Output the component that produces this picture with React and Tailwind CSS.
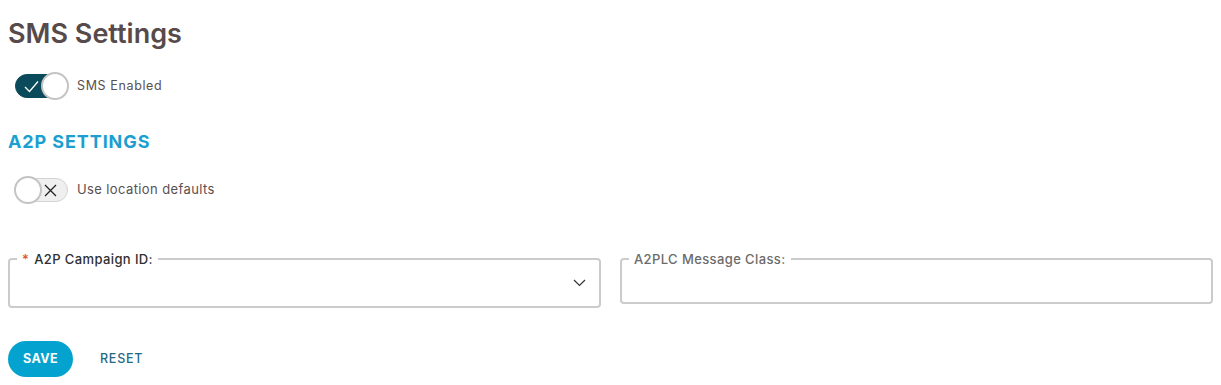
import React, { useState } from 'react';

const Toggle = ({ on, onChange }) => (
  <button
    type="button"
    onClick={() => onChange(!on)}
    className={`relative flex h-[24px] w-[53px] items-center rounded-full border ${on ? 'border-[#0b4a5a] bg-[#0b4a5a]' : 'border-[#d4d4d4] bg-[#efefef]'}`}
  >
    {on ? (
      <svg className="absolute left-[8px] h-[13px] w-[15px]" viewBox="0 0 15 13" fill="none" stroke="white" strokeWidth="1.3">
        <path d="M1 7 L5.5 11.5 L14 1.5" />
      </svg>
    ) : (
      <svg className="absolute right-[10px] h-[13px] w-[13px]" viewBox="0 0 13 13" fill="none" stroke="#222" strokeWidth="1.3">
        <path d="M1 1 L12 12 M12 1 L1 12" />
      </svg>
    )}
    <span
      className={`absolute top-1/2 h-[28px] w-[28px] -translate-y-1/2 rounded-full border-2 border-[#c4c4c4] bg-white ${on ? 'right-[-2px]' : 'left-[-2px]'}`}
    />
  </button>
);

const Field = ({ label, required, select, muted, h }) => (
  <fieldset className={`rounded-[4px] border-2 border-[#cbcbcb] px-3 ${h}`}>
    <legend className={`ml-[-5px] px-[5px] text-[13px] font-medium leading-[14px] tracking-[0.03em] ${muted ? 'text-[#6b6b6b]' : 'text-[#2f2f2f]'}`}>
      {required && <span className="mr-[5px] text-[#e0502a]">*</span>}
      {label}
    </legend>
    {select && (
      <div className="flex h-full items-center justify-end pb-[6px] pr-[1px]">
        <svg className="h-[8px] w-[13px]" viewBox="0 0 13 8" fill="none" stroke="#333" strokeWidth="1.2">
          <path d="M1 1 L6.5 6.5 L12 1" />
        </svg>
      </div>
    )}
  </fieldset>
);

const App = () => {
  const [sms, setSms] = useState(true);
  const [defaults, setDefaults] = useState(false);

  return (
    <div className="min-h-[385px] bg-white px-2 pt-[17px] font-['Inter',sans-serif]">
      <h1 className="text-[27px] font-semibold leading-[34px] text-[#574a4a]">SMS Settings</h1>

      <div className="mt-[23px] flex items-center gap-[9px] pl-[7px]">
        <Toggle on={sms} onChange={setSms} />
        <span className="text-[12.5px] tracking-[0.05em] text-[#5a4f4f]">SMS Enabled</span>
      </div>

      <h2 className="mt-[32px] text-[18px] font-bold leading-[24px] tracking-[0.05em] text-[#1a9fd0]">A2P SETTINGS</h2>

      <div className="mt-[24px] flex items-center gap-[9px] pl-[7px]">
        <Toggle on={defaults} onChange={setDefaults} />
        <span className="text-[13px] tracking-[0.03em] text-[#5a4f4f]">Use location defaults</span>
      </div>

      <div className="mt-[50px] grid grid-cols-2 gap-[19px]">
        <Field label="A2P Campaign ID:" required select h="h-[56px]" />
        <Field label="A2PLC Message Class:" muted h="h-[52px]" />
      </div>

      <div className="mt-[33px] flex items-center gap-[27px]">
        <button className="h-[36px] w-[65px] rounded-full bg-[#04a3cf] text-[12.5px] font-bold tracking-[0.03em] text-white">
          SAVE
        </button>
        <button className="text-[12.5px] font-medium tracking-[0.06em] text-[#1f6a85]">RESET</button>
      </div>
    </div>
  );
};

export default App;
